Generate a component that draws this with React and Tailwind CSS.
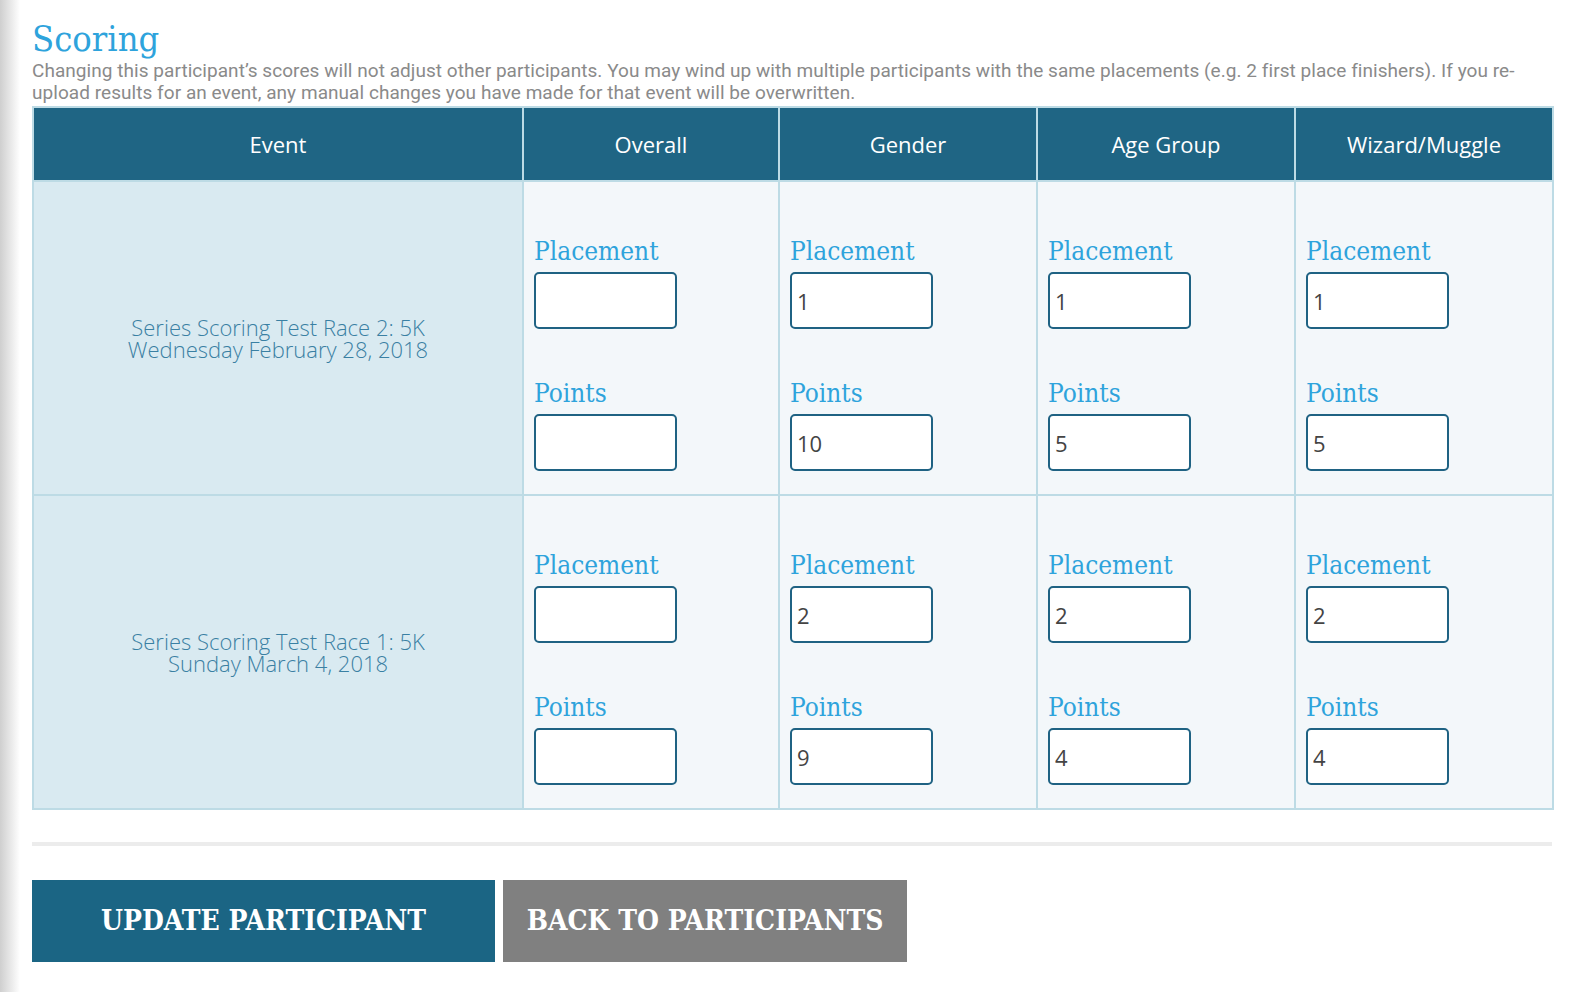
import React from "react";

const slab = { fontFamily: '"DejaVu Serif Condensed", "DejaVu Serif", serif' };

const rows = [
  {
    name: "Series Scoring Test Race 2: 5K",
    date: "Wednesday February 28, 2018",
    values: [["", ""], ["1", "10"], ["1", "5"], ["1", "5"]],
  },
  {
    name: "Series Scoring Test Race 1: 5K",
    date: "Sunday March 4, 2018",
    values: [["", ""], ["2", "9"], ["2", "4"], ["2", "4"]],
  },
];

const headers = ["Overall", "Gender", "Age Group", "Wizard/Muggle"];

function Field({ label, value }) {
  return (
    <div>
      <div
        className="text-[26px] leading-[30px] mb-[6px] text-[#2ea3dc]"
        style={slab}
      >
        {label}
      </div>
      <input
        defaultValue={value}
        className="w-[143px] h-[57px] rounded-[5px] border-2 border-[#1f6283] bg-white px-[5px] text-[22px] text-[#444] font-['Open_Sans',sans-serif] outline-none"
      />
    </div>
  );
}

export default function App() {
  return (
    <div className="flex min-h-[992px] bg-white font-['Open_Sans',sans-serif]">
      <div className="w-[20px] shrink-0 bg-linear-to-r from-[#cfcfcf] to-white" />
      <div className="w-[1520px] pl-[12px] pt-[18px]">
        <h2
          className="text-[36px] leading-[42px] text-[#2ea3dc]"
          style={slab}
        >
          Scoring
        </h2>
        <p className="text-[19px] leading-[22px] text-[#8a8a8a] font-['Roboto',sans-serif] tracking-[0.05px]">
          Changing this participant’s scores will not adjust other participants. You may wind up with multiple participants with the same placements (e.g. 2 first place finishers). If you re-upload results for an event, any manual changes you have made for that event will be overwritten.
        </p>

        <table className="mt-[2px] w-[1520px] border-collapse border-2 border-[#bddbe5] table-fixed">
          <colgroup>
            <col className="w-[490px]" />
            <col className="w-[256px]" />
            <col className="w-[258px]" />
            <col className="w-[258px]" />
            <col className="w-[258px]" />
          </colgroup>
          <thead>
            <tr className="bg-[#1f6584] text-white text-[22px] h-[74px]">
              <th className="font-normal border-2 border-[#bddbe5]">Event</th>
              {headers.map((h) => (
                <th key={h} className="font-normal border-2 border-[#bddbe5]">
                  {h}
                </th>
              ))}
            </tr>
          </thead>
          <tbody>
            {rows.map((r) => (
              <tr key={r.name} className="h-[314px]">
                <td className="bg-[#d9eaf1] border-2 border-[#bddbe5] text-center align-middle text-[22px] leading-[22px] font-light text-[#3a80a3]">
                  <div>{r.name}</div>
                  <div>{r.date}</div>
                </td>
                {r.values.map((v, i) => (
                  <td
                    key={i}
                    className="bg-[#f3f7fa] border-2 border-[#bddbe5] align-top pl-[10px] pt-[54px]"
                  >
                    <div className="flex flex-col gap-[49px]">
                      <Field label="Placement" value={v[0]} />
                      <Field label="Points" value={v[1]} />
                    </div>
                  </td>
                ))}
              </tr>
            ))}
          </tbody>
        </table>

        <div className="mt-[32px] h-[4px] w-[1520px] bg-[#ececec]" />

        <div className="mt-[34px] flex gap-[8px]">
          <button
            className="w-[463px] h-[82px] bg-[#1b6584] text-white text-[28px] font-bold uppercase"
            style={slab}
          >
            Update Participant
          </button>
          <button
            className="w-[404px] h-[82px] bg-[#808080] text-white text-[28px] font-bold uppercase"
            style={slab}
          >
            Back to Participants
          </button>
        </div>
      </div>
    </div>
  );
}
